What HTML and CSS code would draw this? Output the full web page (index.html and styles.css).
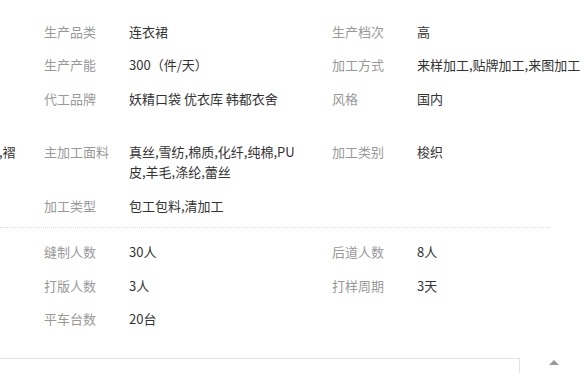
FILE: index.html
```html
<!DOCTYPE html>
<html lang="zh-CN">
<head>
<meta charset="utf-8">
<title>工厂信息</title>
<link rel="stylesheet" href="styles.css">
</head>
<body>
<div class="page">
  <div class="section first">
    <div class="row">
      <div class="lead"></div>
      <div class="label">生产品类</div>
      <div class="value">连衣裙</div>
      <div class="label">生产档次</div>
      <div class="value wide">高</div>
    </div>
    <div class="row">
      <div class="lead"></div>
      <div class="label">生产产能</div>
      <div class="value">300（件/天）</div>
      <div class="label">加工方式</div>
      <div class="value wide">来样加工,贴牌加工,来图加工</div>
    </div>
    <div class="row">
      <div class="lead"></div>
      <div class="label">代工品牌</div>
      <div class="value">妖精口袋 优衣库 韩都衣舍</div>
      <div class="label">风格</div>
      <div class="value wide">国内</div>
    </div>
    <div class="row spaced">
      <div class="lead"><span class="clipped">,褶</span></div>
      <div class="label">主加工面料</div>
      <div class="value">真丝,雪纺,棉质,化纤,纯棉,PU皮,羊毛,涤纶,蕾丝</div>
      <div class="label">加工类别</div>
      <div class="value wide">梭织</div>
    </div>
    <div class="row">
      <div class="lead"></div>
      <div class="label">加工类型</div>
      <div class="value">包工包料,清加工</div>
      <div class="label"></div>
      <div class="value wide"></div>
    </div>
  </div>
  <div class="section second">
    <div class="row">
      <div class="lead"></div>
      <div class="label">缝制人数</div>
      <div class="value">30人</div>
      <div class="label">后道人数</div>
      <div class="value wide">8人</div>
    </div>
    <div class="row">
      <div class="lead"></div>
      <div class="label">打版人数</div>
      <div class="value">3人</div>
      <div class="label">打样周期</div>
      <div class="value wide">3天</div>
    </div>
    <div class="row">
      <div class="lead"></div>
      <div class="label">平车台数</div>
      <div class="value">20台</div>
      <div class="label"></div>
      <div class="value wide"></div>
    </div>
  </div>
  <div class="footer">
    <div class="footer-line"></div>
    <div class="toggle-tab"><span class="arrow-up"></span></div>
  </div>
</div>
</body>
</html>
```
FILE: styles.css
```css
html, body {
  margin: 0;
  padding: 0;
  background: #ffffff;
}

body {
  font-family: "Noto Sans CJK SC", "Microsoft YaHei", sans-serif;
  font-size: 13px;
  color: #333333;
  overflow: hidden;
}

.page {
  width: 586px;
}

.section {
  display: flex;
  flex-direction: column;
}

.section.first {
  padding-top: 15px;
  padding-bottom: 4px;
  width: 550px;
  border-bottom: 1px dotted #d8d8d8;
}

.section.second {
  padding-top: 8px;
  padding-bottom: 22px;
}

.row {
  display: grid;
  grid-template-columns: 44px 85px 203px 85px 1fr;
  line-height: 20px;
  padding: 6.75px 0;
}

.row.spaced {
  margin-top: 20px;
}

.lead {
  overflow: hidden;
  white-space: nowrap;
}

.clipped {
  display: inline-block;
  margin-left: -1px;
  color: #333333;
}

.label {
  color: #999999;
  white-space: nowrap;
}

.value {
  color: #333333;
  padding-right: 33px;
}

.value.wide {
  padding-right: 0;
  white-space: nowrap;
}

.footer {
  display: flex;
  align-items: flex-start;
}

.footer-line {
  flex: 1;
  border-top: 1px solid #e3e3e3;
}

.toggle-tab {
  width: 66px;
  height: 13px;
  border-left: 1px solid #e3e3e3;
  border-bottom: 1px solid #e3e3e3;
  display: flex;
  justify-content: center;
  align-items: flex-start;
  padding-top: 2px;
  box-sizing: content-box;
}

.arrow-up {
  width: 0;
  height: 0;
  border-left: 5px solid transparent;
  border-right: 5px solid transparent;
  border-bottom: 5px solid #999999;
  margin-left: 2px;
}
```
